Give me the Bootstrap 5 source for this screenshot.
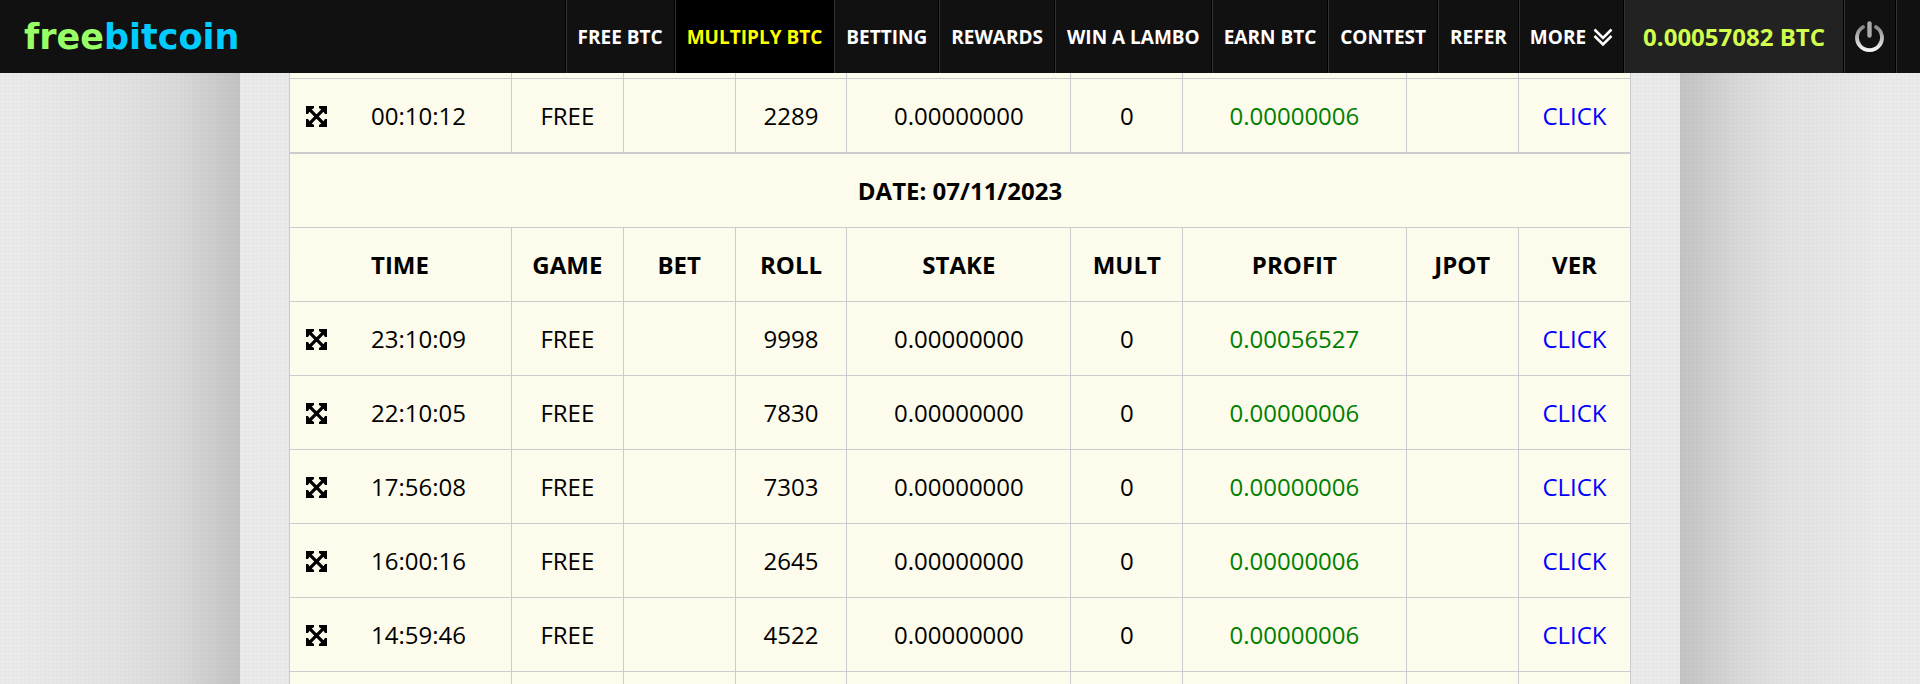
<!DOCTYPE html>
<html lang="en">
<head>
<meta charset="utf-8">
<meta name="viewport" content="width=device-width, initial-scale=1">
<title>FreeBitcoin</title>
<link rel="stylesheet" href="https://cdn.jsdelivr.net/npm/bootstrap@5.3.0/dist/css/bootstrap.min.css">
<style>
  body { font-family: "Open Sans", sans-serif; color: #000; background: #e9e9e9; }
  .weave {
    background-color: #eaeaea;
    background-image:
      repeating-linear-gradient(0deg, rgba(0,0,0,.01) 0 1px, transparent 1px 4px),
      repeating-linear-gradient(90deg, rgba(0,0,0,.01) 0 1px, transparent 1px 4px);
  }
  .topbar { background: #111; min-height: 73px; padding: 0 24px; z-index: 10; }
  .logo { font: bold 35px/40px "DejaVu Sans", sans-serif; color: #9f6; text-decoration: none; }
  .logo span { color: #0cf; }
  .menu > li { display: flex; border-left: 1px solid #333; border-right: 1px solid #000; }
  .menu > li:first-child { box-shadow: -1px 0 #000; }
  .menu > li:last-child { box-shadow: 1px 0 #333; }
  .menu a, .menu button {
    display: flex; align-items: center; gap: 7px; padding: 0 11px; border: 0; background: none;
    color: #fff; font-size: 19px; line-height: 28px; font-weight: 700; text-decoration: none; white-space: nowrap;
  }
  .menu button { padding: 0 10px; }
  .menu a.current { background: #000; color: #ff0; }
  .menu .balance { background: #222; }
  .menu .balance a { color: #d2ff4d; font-size: 24px; padding: 0 18px; }
  .side { flex: 1 1 0; }
  .side-start { background-image: linear-gradient(270deg, rgba(0,0,0,.17), rgba(0,0,0,.12) 30px, rgba(0,0,0,.075) 60px, rgba(0,0,0,.035) 115px, transparent 220px); }
  .side-end { background-image: linear-gradient(90deg, rgba(0,0,0,.17), rgba(0,0,0,.12) 30px, rgba(0,0,0,.075) 60px, rgba(0,0,0,.035) 100px, transparent 200px); }
  .content { width: 75%; padding: 73px 49px 0; }
  .history { width: 100%; table-layout: fixed; border-collapse: separate; border-spacing: 0; background: #fdfbec;
    border-left: 1px solid #ccc; font-size: 24px; line-height: 33px; text-align: center; }
  .history th, .history td { height: 74px; padding: 0; border-right: 1px solid #ccc; border-bottom: 1px solid #ccc; white-space: nowrap; }
  .history .cut td { height: 6px; }
  .history .date th { height: 75px; border-top: 1px solid #ccc; }
  .history .time { text-align: start; padding-left: 16px; }
  .history th.time { padding-left: 81px; }
  .expand { display: inline-flex; width: 65px; padding: 0; border: 0; background: none; color: #000; vertical-align: -2px; }
  .profit { color: #008000; }
  .history a { color: #00f; text-decoration: none; }
</style>
</head>
<body class="weave">
<svg class="d-none">
  <symbol id="expand" viewBox="0 0 21 21">
    <path fill="currentColor" d="M0 0h8v2L5.800 3.500 10.500 8.200 15.200 3.500 13 2V0h8v8h-2L17.500 5.800 12.800 10.500 17.500 15.200 19 13h2v8h-8v-2L15.200 17.500 10.500 12.800 5.800 17.500 8 19v2H0v-8h2L3.500 15.200 8.200 10.500 3.500 5.800 2 8H0z"/>
  </symbol>
</svg>

<header class="topbar fixed-top d-flex justify-content-between align-items-stretch">
  <a class="logo align-self-center" href="#">free<span>bitcoin</span></a>
  <ul class="menu list-unstyled d-flex m-0">
    <li><a href="#">FREE BTC</a></li>
    <li><a class="current" href="#">MULTIPLY BTC</a></li>
    <li><a href="#">BETTING</a></li>
    <li><a href="#">REWARDS</a></li>
    <li><a href="#">WIN A LAMBO</a></li>
    <li><a href="#">EARN BTC</a></li>
    <li><a href="#">CONTEST</a></li>
    <li><a href="#">REFER</a></li>
    <li><button type="button">MORE
      <svg width="20" height="20" viewBox="0 0 20 20" fill="none" stroke="#fff" stroke-width="2.600" aria-hidden="true"><path d="M1.500 2.500 10 11 18.500 2.500M1.500 9 10 17.500 18.500 9"/></svg></button></li>
    <li class="balance"><a href="#">0.00057082 BTC</a></li>
    <li><button type="button" aria-label="Log out">
      <svg width="30" height="34" viewBox="0 0 30 34" fill="none" aria-hidden="true">
        <defs><linearGradient id="ring" x1="0" y1="0" x2="0" y2="1"><stop offset="0" stop-color="#888"/><stop offset="1" stop-color="#f4f4f4"/></linearGradient></defs>
        <path d="M8 7A12.500 12.500 0 1 0 21 7" stroke="url(#ring)" stroke-width="3.800" stroke-linecap="round"/>
        <path d="M14.500 3.500v12" stroke="#aaa" stroke-width="4.400" stroke-linecap="round"/>
      </svg></button></li>
  </ul>
</header>

<div class="d-flex vh-100 overflow-hidden">
  <div class="side side-start"></div>
  <main class="content">
    <table class="history">
      <colgroup>
        <col style="width:16.55%"><col style="width:8.34%"><col style="width:8.34%"><col style="width:8.34%"><col style="width:16.7%"><col style="width:8.34%"><col style="width:16.66%"><col style="width:8.38%"><col style="width:8.35%">
      </colgroup>
      <tbody>
        <tr class="cut"><td></td><td></td><td></td><td></td><td></td><td></td><td></td><td></td><td></td></tr>
        <tr><td class="time"><button class="expand" type="button" aria-label="Expand"><svg width="21" height="21"><use href="#expand"/></svg></button>00:10:12</td><td>FREE</td><td></td><td>2289</td><td>0.00000000</td><td>0</td><td class="profit">0.00000006</td><td></td><td><a href="#">CLICK</a></td></tr>
        <tr class="date"><th colspan="9">DATE: 07/11/2023</th></tr>
        <tr><th class="time">TIME</th><th>GAME</th><th>BET</th><th>ROLL</th><th>STAKE</th><th>MULT</th><th>PROFIT</th><th>JPOT</th><th>VER</th></tr>
        <tr><td class="time"><button class="expand" type="button" aria-label="Expand"><svg width="21" height="21"><use href="#expand"/></svg></button>23:10:09</td><td>FREE</td><td></td><td>9998</td><td>0.00000000</td><td>0</td><td class="profit">0.00056527</td><td></td><td><a href="#">CLICK</a></td></tr>
        <tr><td class="time"><button class="expand" type="button" aria-label="Expand"><svg width="21" height="21"><use href="#expand"/></svg></button>22:10:05</td><td>FREE</td><td></td><td>7830</td><td>0.00000000</td><td>0</td><td class="profit">0.00000006</td><td></td><td><a href="#">CLICK</a></td></tr>
        <tr><td class="time"><button class="expand" type="button" aria-label="Expand"><svg width="21" height="21"><use href="#expand"/></svg></button>17:56:08</td><td>FREE</td><td></td><td>7303</td><td>0.00000000</td><td>0</td><td class="profit">0.00000006</td><td></td><td><a href="#">CLICK</a></td></tr>
        <tr><td class="time"><button class="expand" type="button" aria-label="Expand"><svg width="21" height="21"><use href="#expand"/></svg></button>16:00:16</td><td>FREE</td><td></td><td>2645</td><td>0.00000000</td><td>0</td><td class="profit">0.00000006</td><td></td><td><a href="#">CLICK</a></td></tr>
        <tr><td class="time"><button class="expand" type="button" aria-label="Expand"><svg width="21" height="21"><use href="#expand"/></svg></button>14:59:46</td><td>FREE</td><td></td><td>4522</td><td>0.00000000</td><td>0</td><td class="profit">0.00000006</td><td></td><td><a href="#">CLICK</a></td></tr>
        <tr><td></td><td></td><td></td><td></td><td></td><td></td><td></td><td></td><td></td></tr>
      </tbody>
    </table>
  </main>
  <div class="side side-end"></div>
</div>
<script src="https://cdn.jsdelivr.net/npm/bootstrap@5.3.0/dist/js/bootstrap.bundle.min.js"></script>
</body>
</html>
